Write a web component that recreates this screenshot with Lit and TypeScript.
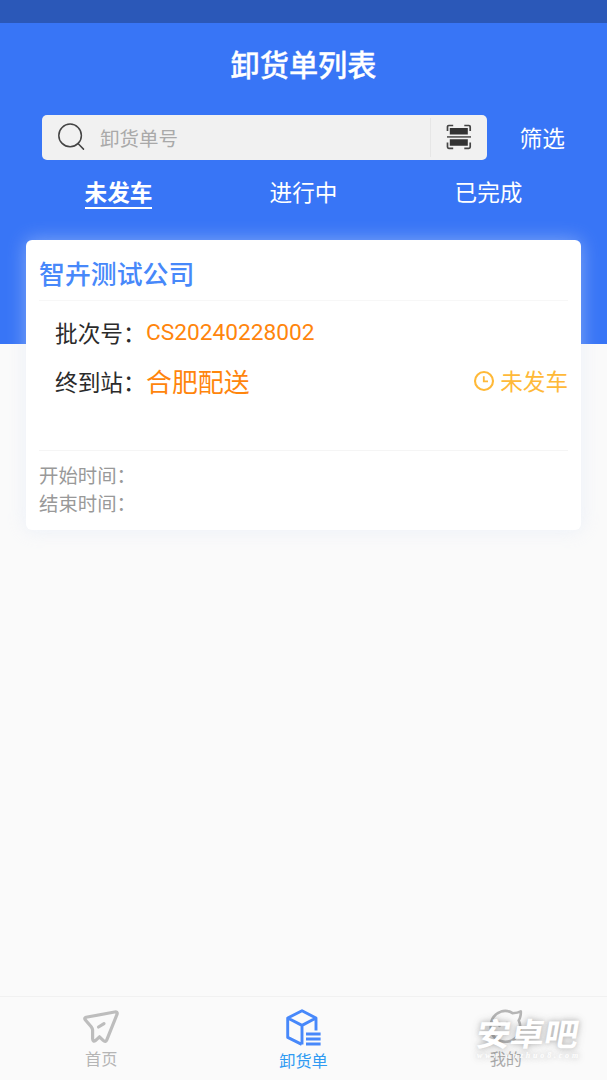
import { LitElement, html, css, svg } from "lit";
import { customElement, property, state } from "lit/decorators.js";
import { classMap } from "lit/directives/class-map.js";

const searchIcon = svg`<svg width="30" height="30" viewBox="0 0 30 30" fill="none" stroke="#444" stroke-width="1.5" stroke-linecap="round"><circle cx="13.1" cy="13.4" r="11.3"/><path d="M21 21.5L26.5 27.1"/></svg>`;
const scanIcon = svg`<svg width="26" height="26" viewBox="0 0 26 26" fill="none"><g stroke="#444" stroke-width="1.7"><path d="M1.5 7V2.8Q1.5 1.5 2.8 1.5H7.2M18.3 1.5h4.6q1.3 0 1.3 1.3V7M1.5 18.6v4.5q0 1.3 1.3 1.3h4.4M18.3 24.4h4.6q1.3 0 1.3-1.3v-4.5"/></g><path fill="#333" d="M3.8 4h18v6.5H3.8zM3.8 15.3h18v6.5h-18z"/><path fill="#666" d="M1 12h24v1.8H1z"/></svg>`;
const clockIcon = svg`<svg width="22" height="22" viewBox="0 0 22 22" fill="none" stroke="#ffb938"><circle cx="11" cy="11" r="9" stroke-width="2.1"/><path d="M10.8 6.2v5.2h4.2" stroke-width="1.8"/></svg>`;
const planeIcon = svg`<svg width="38" height="36" viewBox="0 0 38 36" fill="none" stroke="#bdbdbd" stroke-width="3.2" stroke-linecap="round" stroke-linejoin="round"><path d="M3.2 10.8Q2 8.8 4 8.3L32.6 3Q36 2.5 35 5.4L24.8 30.8Q23.6 33.7 21.2 31.4L17.5 27.8L13.7 31.4Q10.8 33.2 10.6 30V21.2Q10.5 19.5 9.2 17.8Z"/><path d="M16.5 18L22 14.6"/></svg>`;
const boxIcon = svg`<svg width="36" height="38" viewBox="0 0 36 38" fill="none" stroke="#4788fa" stroke-width="2.9" stroke-linejoin="round"><path d="M16.7 36.4L2.7 29.4V10L17 2.8L31 10v12.6M2.7 10L17 17.4L31 10M17 17.4v19"/><path d="M21 26h14.6M21 31h14.6M21 36h14.6"/></svg>`;
const faceIcon = svg`<svg width="40" height="38" viewBox="0 0 40 38" fill="none" stroke="#b5b5b5" stroke-width="2.6" stroke-linecap="round" stroke-linejoin="round"><path d="M26.5 5.2Q32 5 34.8 3.4Q35.2 8.5 32.7 12.4Q35.6 18.5 33.2 24Q30 33.6 19.2 33.8Q6.4 33 4.8 20.5Q4 7.6 15 3.6Q21 1.6 26.5 5.2Z"/><path d="M13.5 15v3M21 15v3"/></svg>`;

@customElement("tab-item")
class TabItem extends LitElement {
  @property() label = "";
  @property() tone = "";
  static styles = css`
    :host { flex: 1; display: flex; flex-direction: column; align-items: center; padding-top: 10px; }
    .icon { height: 40px; display: flex; align-items: center; }
    .label { font-size: 16.2px; line-height: 23px; color: #b5b5b5; }
    .active { color: #2f9af2; padding-top: 2px; }
    .dark { color: #acacac; }
  `;
  render() {
    return html`<div class="icon"><slot></slot></div>
      <div class=${classMap({ label: true, active: this.tone === "active", dark: this.tone === "dark" })}>${this.label}</div>`;
  }
}

@customElement("app-root")
class AppRoot extends LitElement {
  @state() current = 0;
  static styles = css`
    :host { display: block; font-family: "Noto Sans CJK SC", sans-serif; }
    * { box-sizing: border-box; }
    svg { display: block; }
    .page { height: 1080px; display: flex; flex-direction: column; background: linear-gradient(#3875f6 343.5px, #fafafa 343.5px); overflow: hidden; position: relative; }
    .status { height: 23px; background: #2b58b8; }
    .title { height: 91.5px; line-height: 80px; text-align: center; font-size: 29.2px; font-weight: 500; color: #fff; -webkit-text-stroke: 0.3px #fff; }
    .searchrow { display: flex; align-items: center; padding-left: 42px; }
    .search { width: 445px; height: 45.5px; background: #f1f1f1; border-radius: 5px; display: flex; align-items: center; padding-left: 15px; }
    .hint { flex: 1; padding-left: 13px; font-size: 19.5px; color: #a9a9a9; line-height: 45px; }
    .scan { width: 57px; height: 39px; border-left: 1.5px solid #e6e6e6; display: flex; align-items: center; justify-content: center; }
    .filter { margin-left: 32.5px; font-size: 22.7px; color: #fff; line-height: 44px; padding-top: 1px; }
    .tabs { display: flex; padding: 15px 26px 0; height: 80px; }
    .tab { flex: 1; display: flex; justify-content: center; align-items: flex-start; color: #fff; font-size: 22.6px; }
    .tab span { height: 34px; line-height: 33px; border-bottom: 2px solid transparent; }
    .tab.on span { font-weight: 700; border-color: #fff; }
    .card { margin: 0 26px; height: 289.5px; background: #fff; border-radius: 6px; padding: 0 13px; box-shadow: 0 0 19px rgba(219, 229, 249, 0.46); flex: none; }
    .company { height: 60.5px; line-height: 65px; font-size: 25.9px; font-weight: 500; color: #4788fa; border-bottom: 1.5px solid #f7f7f7; }
    .body { height: 150px; padding: 8px 0 0 16px; border-bottom: 1.5px solid #f5f5f5; }
    .row { display: flex; height: 49px; line-height: 47px; font-size: 22.7px; color: #2b2b2b; }
    .key { width: 91px; white-space: nowrap; }
    .code { font-family: Roboto, sans-serif; font-size: 22.7px; color: #ff850c; line-height: 47px; }
    .station { font-size: 25.9px; color: #ff850c; flex: 1; line-height: 46px; }
    .state { display: flex; color: #ffb938; font-size: 22.6px; gap: 5px; align-items: center; height: 46px; }
    .times { padding-top: 10px; font-size: 19.4px; line-height: 28px; color: #999; }
    .space { flex: 1; }
    .bar { height: 84px; border-top: 1.5px solid #f1f1f1; background: #fafafa; display: flex; }
    .mark { position: absolute; left: 477px; top: 1015px; width: 106px; color: #fff; text-shadow: 0 0 5px rgba(90, 90, 90, 0.3), 0 0 9px rgba(90, 90, 90, 0.3); }
    .name { font-size: 34px; line-height: 36px; font-weight: 700; transform: skewX(-10deg) scaleY(0.94); white-space: nowrap; }
    .site { font: italic 700 8px/10px "Liberation Serif", serif; letter-spacing: 2.8px; white-space: nowrap; opacity: 0.9; }
  `;
  render() {
    return html`<div class="page">
      <div class="status"></div>
      <div class="title">卸货单列表</div>
      <div class="searchrow">
        <div class="search">${searchIcon}<div class="hint">卸货单号</div><div class="scan">${scanIcon}</div></div>
        <div class="filter">筛选</div>
      </div>
      <div class="tabs">
        ${["未发车", "进行中", "已完成"].map((t, i) => html`<div class=${classMap({ tab: true, on: i === this.current })} @click=${() => (this.current = i)}><span>${t}</span></div>`)}
      </div>
      <div class="card">
        <div class="company">智卉测试公司</div>
        <div class="body">
          <div class="row"><div class="key">批次号：</div><div class="code">CS20240228002</div></div>
          <div class="row"><div class="key">终到站：</div><div class="station">合肥配送</div><div class="state">${clockIcon}<span>未发车</span></div></div>
        </div>
        <div class="times"><div>开始时间：</div><div>结束时间：</div></div>
      </div>
      <div class="space"></div>
      <div class="bar">
        <tab-item label="首页">${planeIcon}</tab-item>
        <tab-item label="卸货单" tone="active">${boxIcon}</tab-item>
        <tab-item label="我的" tone="dark">${faceIcon}</tab-item>
      </div>
      <div class="mark"><div class="name">安卓吧</div><div class="site">www.anzhuo8.com</div></div>
    </div>`;
  }
}
